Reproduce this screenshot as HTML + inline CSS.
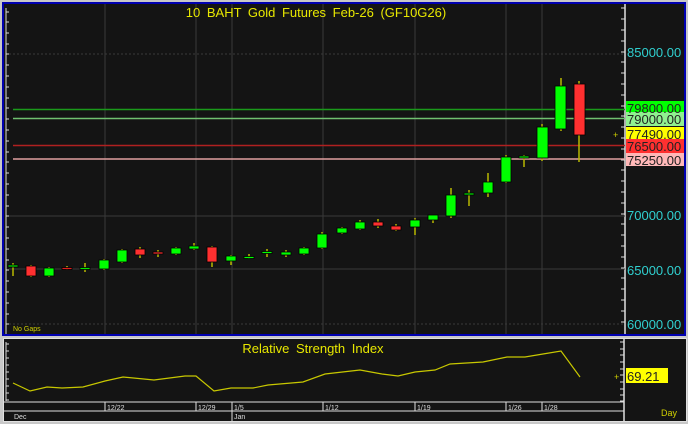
<!DOCTYPE html>
<html><head><meta charset="utf-8"><style>
html,body{margin:0;padding:0;background:#c8c8c8;width:688px;height:424px;overflow:hidden}
svg{display:block}
text{font-family:"Liberation Sans",sans-serif}
</style></head><body>
<svg width="688" height="424" viewBox="0 0 688 424" xmlns="http://www.w3.org/2000/svg">
<rect x="0" y="0" width="688" height="424" fill="#c8c8c8"/>
<!-- main panel -->
<rect x="2" y="2" width="684" height="334" fill="#0000b0"/>
<rect x="4" y="4" width="680" height="330" fill="#141414"/>
<line x1="625" y1="4" x2="625" y2="334" stroke="#e0e0e0" stroke-width="1.5"/>
<!-- grid -->
<g stroke="#3a3a3a" stroke-width="1">
<line x1="9" y1="54" x2="625" y2="54" stroke-dasharray="2,2"/>
<line x1="9" y1="216" x2="625" y2="216"/>
<line x1="9" y1="269" x2="625" y2="269"/>
<line x1="9" y1="324" x2="625" y2="324" stroke-dasharray="2,2"/>
<line x1="105" y1="4" x2="105" y2="334"/><line x1="196" y1="4" x2="196" y2="334"/>
<line x1="232" y1="4" x2="232" y2="334"/><line x1="323" y1="4" x2="323" y2="334"/>
<line x1="415" y1="4" x2="415" y2="334"/><line x1="506" y1="4" x2="506" y2="334"/>
<line x1="542" y1="4" x2="542" y2="334"/>
</g>
<!-- left ticks -->
<path d="M6 8V334" stroke="#ddd" stroke-width="1"/>
<g stroke="#ddd" stroke-width="1">
<path d="M6 12h3M6 22h3M6 33h3M6 44h3M6 54h3M6 65h3M6 76h3M6 87h3M6 98h3M6 108h3M6 119h3M6 130h3M6 141h3M6 152h3M6 162h3M6 173h3M6 184h3M6 195h3M6 206h3M6 216h3M6 227h3M6 238h3M6 249h3M6 260h3M6 270h3M6 281h3M6 292h3M6 303h3M6 314h3M6 324h3"/>
<path d="M621 8h4M621 19h4M621 30h4M621 41h4M621 52h4M621 62h4M621 73h4M621 84h4M621 95h4M621 106h4M621 116h4M621 127h4M621 138h4M621 149h4M621 160h4M621 170h4M621 181h4M621 192h4M621 203h4M621 214h4M621 224h4M621 235h4M621 246h4M621 257h4M621 268h4M621 278h4M621 289h4M621 300h4M621 311h4M621 322h4"/>
</g>
<!-- horizontal level lines -->
<line x1="13" y1="109.5" x2="625" y2="109.5" stroke="#1a9a1a" stroke-width="1.5"/>
<line x1="13" y1="118.5" x2="625" y2="118.5" stroke="#70c070" stroke-width="1.5"/>
<line x1="13" y1="145.5" x2="625" y2="145.5" stroke="#b02020" stroke-width="1.5"/>
<line x1="13" y1="159" x2="625" y2="159" stroke="#e0a0a0" stroke-width="1.5"/>
<text x="316" y="17" fill="#e8e800" font-size="13" text-anchor="middle" word-spacing="3">10 BAHT Gold Futures Feb-26 (GF10G26)</text>
<!-- candles -->
<g stroke="#b8b800" stroke-width="1.5">
<path d="M13 263V276M31 265V277M49 267V277M67 266V270M85 263V272M104 259V270M122 249V263M140 247V258M158 250V257M176 247V255M194 243V250M212 246V267M231 255V265M249 254V259M267 249V257M286 250V257M304 247V255M322 232V249M342 227V234M360 220V230M378 219V228M396 224V231M415 218V235M433 215V223M451 188V218M469 190V206M488 173V197M506 155V183M524 155V167M542 124V161M561 78V131M579 81V162"/>
</g>
<g stroke="#000" stroke-width="0.8">
<rect x="8" y="265" width="10" height="2" fill="#00e800"/>
<rect x="26" y="266" width="10" height="10" fill="#ff3030"/>
<rect x="44" y="268" width="10" height="8" fill="#00ff00"/>
<rect x="62" y="267.5" width="10" height="2" fill="#e02020"/>
<rect x="80" y="267.5" width="10" height="2" fill="#00e800"/>
<rect x="99" y="260" width="10" height="9" fill="#00ff00"/>
<rect x="117" y="250" width="10" height="12" fill="#00ff00"/>
<rect x="135" y="249" width="10" height="6" fill="#ff3030"/>
<rect x="153" y="252" width="10" height="2" fill="#ff3030"/>
<rect x="171" y="248" width="10" height="6" fill="#00ff00"/>
<rect x="189" y="246" width="10" height="3" fill="#00ff00"/>
<rect x="207" y="247" width="10" height="15" fill="#ff3030"/>
<rect x="226" y="256" width="10" height="5" fill="#00ff00"/>
<rect x="244" y="256.5" width="10" height="2" fill="#00ff00"/>
<rect x="262" y="251.5" width="10" height="2" fill="#00ff00"/>
<rect x="281" y="252" width="10" height="3" fill="#00ff00"/>
<rect x="299" y="248" width="10" height="6" fill="#00ff00"/>
<rect x="317" y="234" width="10" height="14" fill="#00ff00"/>
<rect x="337" y="228" width="10" height="5" fill="#00ff00"/>
<rect x="355" y="222" width="10" height="7" fill="#00ff00"/>
<rect x="373" y="222" width="10" height="4" fill="#ff3030"/>
<rect x="391" y="226" width="10" height="4" fill="#ff3030"/>
<rect x="410" y="220" width="10" height="7" fill="#00ff00"/>
<rect x="428" y="215" width="10" height="5" fill="#00ff00"/>
<rect x="446" y="195" width="10" height="21" fill="#00ff00"/>
<rect x="464" y="193" width="10" height="2" fill="#00e800"/>
<rect x="483" y="182" width="10" height="11" fill="#00ff00"/>
<rect x="501" y="157" width="10" height="25" fill="#00ff00"/>
<rect x="519" y="156" width="10" height="2" fill="#00e800"/>
<rect x="537" y="127" width="11" height="31" fill="#00ff00"/>
<rect x="555" y="86" width="11" height="43" fill="#00ff00"/>
<rect x="574" y="84" width="11" height="51" fill="#ff3030"/>
</g>
<text x="13" y="331" fill="#d0d000" font-size="7">No Gaps</text>
<!-- price labels -->
<g font-size="13" fill="#30d0d0">
<text x="627" y="57">85000.00</text>
<text x="627" y="220">70000.00</text>
<text x="627" y="275">65000.00</text>
<text x="627" y="329">60000.00</text>
</g>
<rect x="626" y="101" width="58" height="14" fill="#00ff00"/>
<rect x="626" y="112" width="58" height="14" fill="#90f090"/>
<rect x="626" y="127" width="58" height="14" fill="#ffff00"/>
<rect x="626" y="139" width="58" height="14" fill="#ff3030"/>
<rect x="626" y="153" width="58" height="13" fill="#ffb8b8"/>
<g font-size="13" fill="#222">
<text x="627" y="113">79800.00</text>
<text x="627" y="124">79000.00</text>
<text x="627" y="139">77490.00</text>
<text x="627" y="151">76500.00</text>
<text x="627" y="165">75250.00</text>
</g>
<text x="613" y="138" fill="#d0d000" font-size="9">+</text>
<!-- RSI panel -->
<rect x="3" y="338" width="684" height="84" fill="#e0e0e0"/>
<rect x="4" y="339" width="682" height="82" fill="#141414"/>
<line x1="624" y1="339" x2="624" y2="421" stroke="#e0e0e0" stroke-width="1.5"/>
<path d="M6 342V401" stroke="#ddd"/>
<g stroke="#ddd"><path d="M6 344h3M6 351h3M6 358h3M6 365h3M6 372h3M6 379h3M6 386h3M6 393h3M6 400h3M620 342h4M620 349h4M620 355h4M620 362h4M620 369h4M620 375h4M620 382h4M620 389h4M620 395h4M620 401h4"/></g>
<text x="313" y="353" fill="#e8e800" font-size="13" text-anchor="middle" word-spacing="3">Relative Strength Index</text>
<polyline fill="none" stroke="#c8c800" stroke-width="1.2" points="13,383 30,391 47,387 62,388 83,387 105,381 123,377 154,380 185,376 196,376 214,391 231,388 253,388 268,385 303,382 325,374 360,370 382,374 398,376 415,372 435,370 450,364 483,362 507,357 525,357 543,354 561,351 580,377"/>
<rect x="626" y="368" width="42" height="15" fill="#ffff00"/>
<text x="627" y="381" fill="#222" font-size="13">69.21</text>
<text x="614" y="380" fill="#d0d000" font-size="9">+</text>
<!-- date axis -->
<line x1="4" y1="402" x2="624" y2="402" stroke="#e0e0e0"/>
<line x1="4" y1="411" x2="624" y2="411" stroke="#e0e0e0"/>
<g stroke="#e0e0e0"><path d="M105 402V411M196 402V411M232 402V421M323 402V411M415 402V411M506 402V411M542 402V411"/></g>
<g fill="#ddd" font-size="7">
<text x="107" y="410">12/22</text><text x="198" y="410">12/29</text><text x="234" y="410">1/5</text>
<text x="325" y="410">1/12</text><text x="417" y="410">1/19</text><text x="508" y="410">1/26</text><text x="544" y="410">1/28</text>
<text x="14" y="419">Dec</text><text x="234" y="419">Jan</text>
</g>
<text x="661" y="416" fill="#d0d000" font-size="9">Day</text>
</svg>
</body></html>
